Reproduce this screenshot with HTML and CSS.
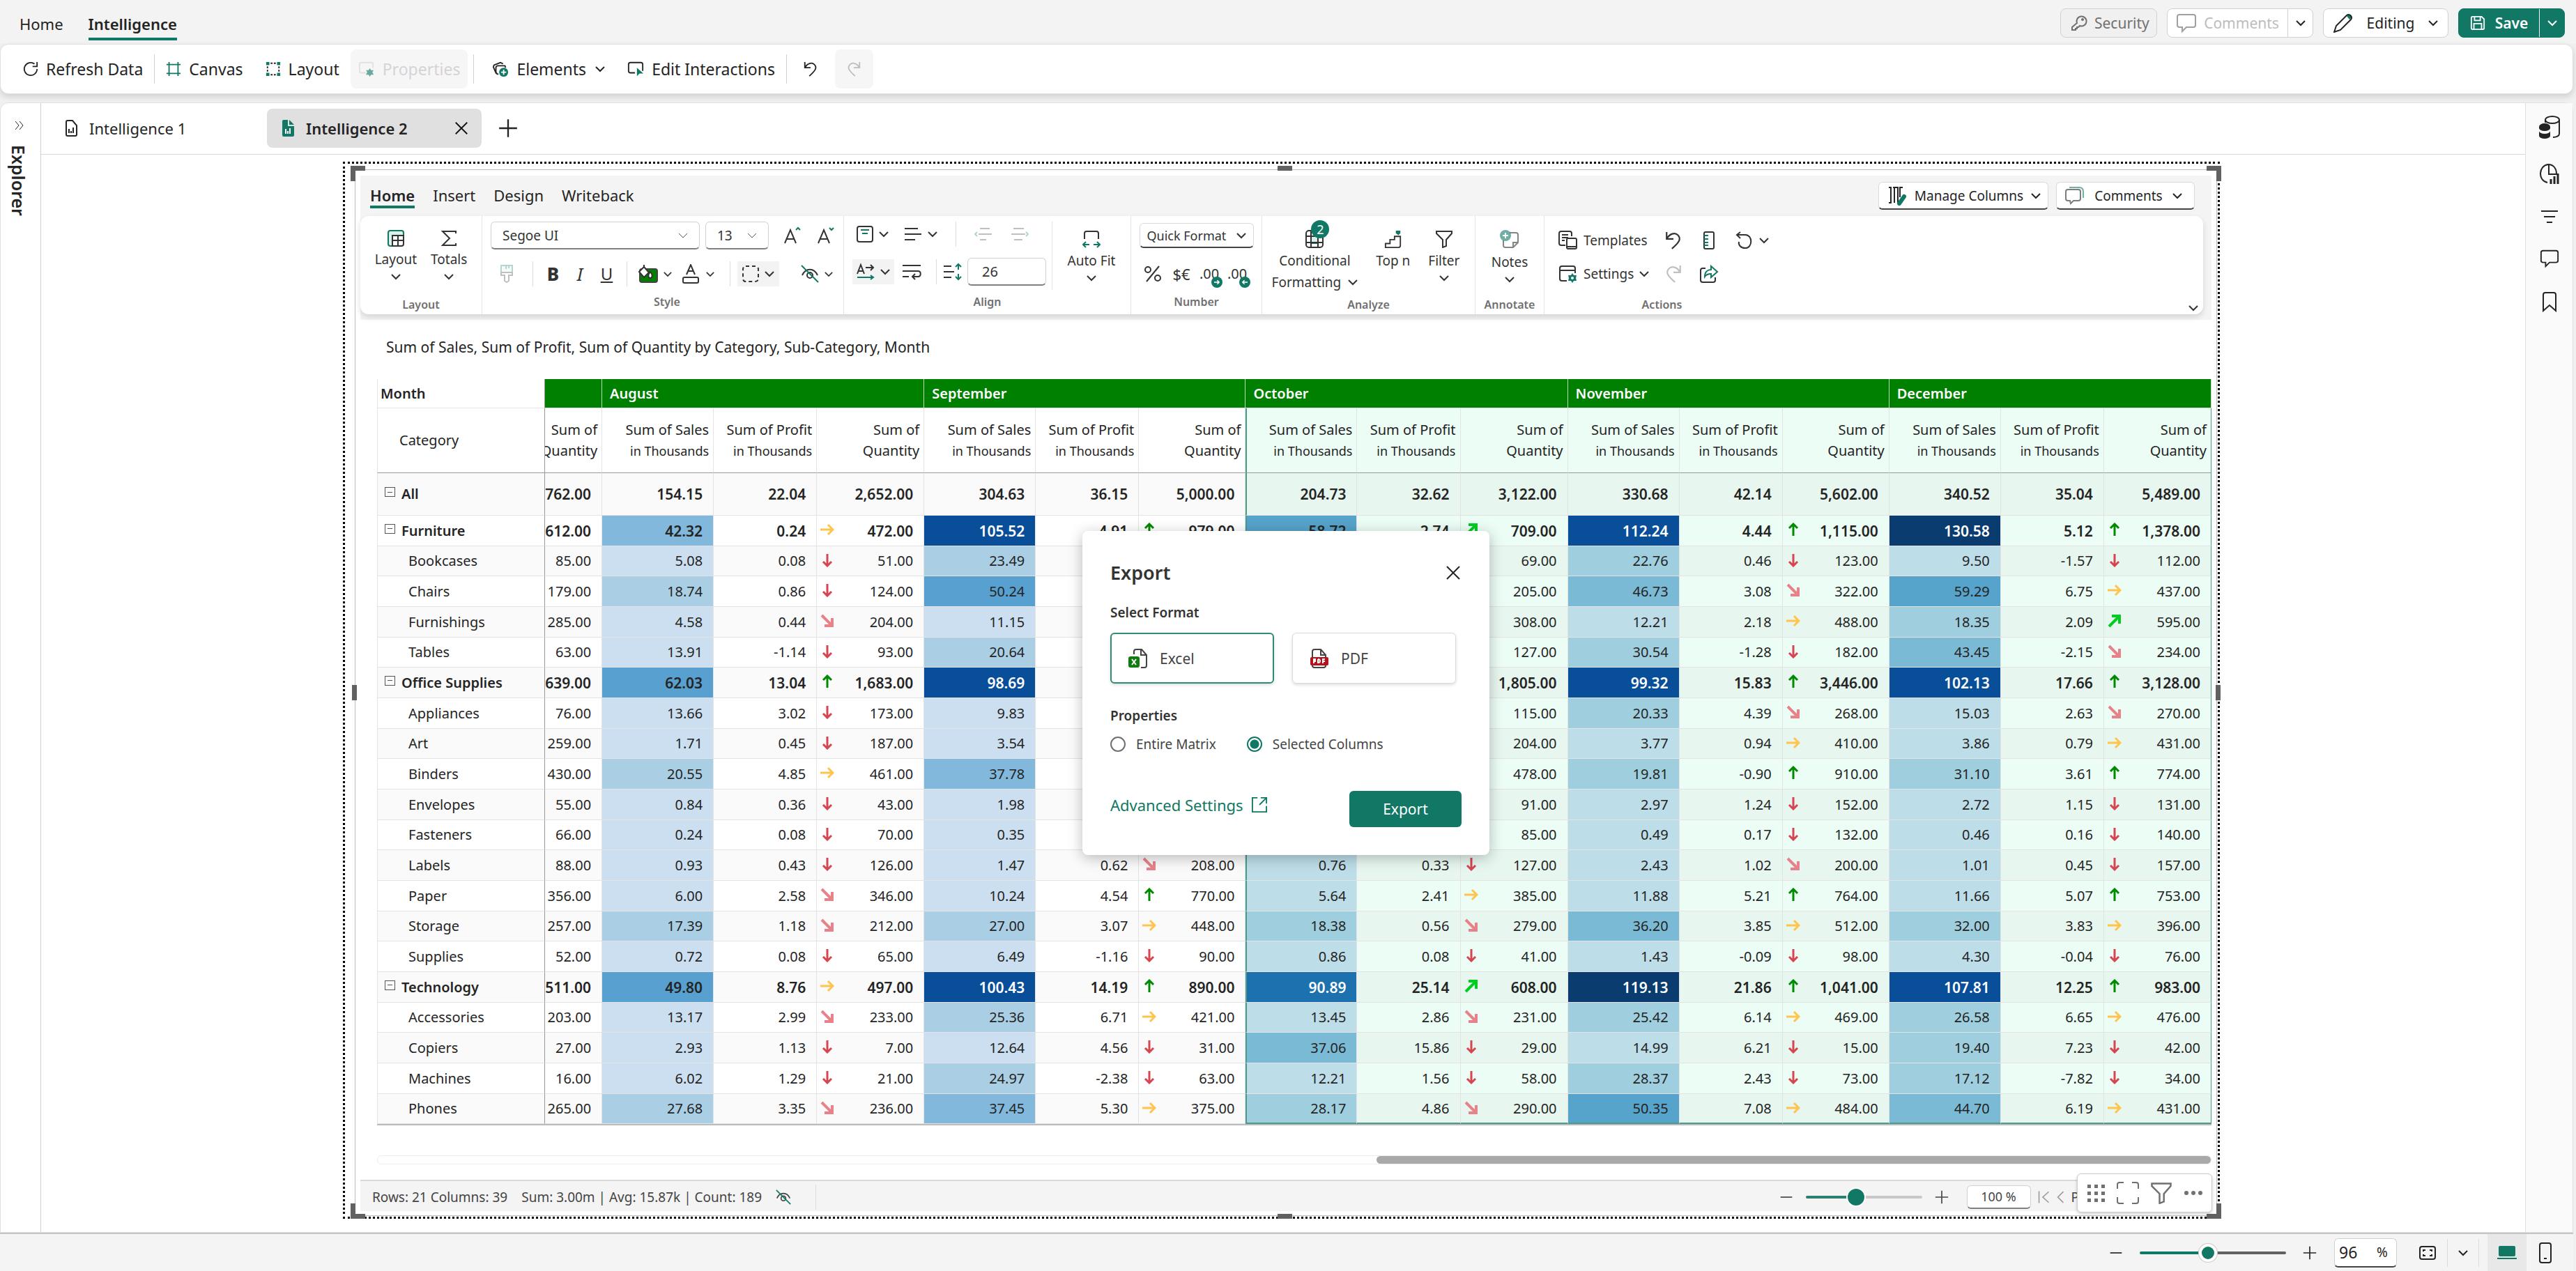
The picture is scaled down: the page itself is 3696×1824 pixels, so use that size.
FILE: index.html
```html
<!DOCTYPE html>
<html lang="en">
<head>
<meta charset="utf-8">
<title>Intelligence 2</title>
<link rel="stylesheet" href="styles.css">
</head>
<body>
<svg class="sprite" aria-hidden="true">
  <symbol id="chev" viewBox="0 0 14 10"><path d="M1 2l6 6 6-6"/></symbol>
  <symbol id="x" viewBox="0 0 24 24"><path d="M3 3l18 18M21 3L3 21"/></symbol>
  <symbol id="plus" viewBox="0 0 24 24"><path d="M12 1v22M1 12h22"/></symbol>
  <symbol id="minus" viewBox="0 0 24 24"><path d="M2 12h20"/></symbol>
  <symbol id="dbl" viewBox="0 0 16 16"><path d="M3 2l5 6-5 6M9 2l5 6-5 6"/></symbol>
  <symbol id="refresh" viewBox="0 0 24 24"><path d="M18 4a10 10 0 1 0 4 8M22 1v7h-7"/></symbol>
  <symbol id="canvas" viewBox="0 0 24 24"><path class="g" d="M5 1v22M19 1v22M1 5h22M1 19h22"/></symbol>
  <symbol id="layout2" viewBox="0 0 24 24"><path d="M8 3h3M13 3h3M8 21h3M13 21h3M3 8v3M3 13v3M21 8v3M21 13v3"/><path class="gf" d="M1 1h5v5H1zM18 1h5v5h-5zM1 18h5v5H1zM18 18h5v5h-5z"/></symbol>
  <symbol id="props" viewBox="0 0 26 24"><path d="M12 18H5a3 3 0 0 1-3-3V5a3 3 0 0 1 3-3h15a3 3 0 0 1 3 3v5"/><path class="gf" d="M18 11l2 3 4 0-2 3 2 4-4 0-2 3-2-3-4 0 2-4-2-3 4 0z"/></symbol>
  <symbol id="elements" viewBox="0 0 26 24"><path d="M7 17l-1 1-4-9 1-3 10-4 4 2M10 20H8l-2-3V9l2-2h12l1 3"/><circle class="gf" cx="18" cy="17" r="7"/><path class="w" d="M18 13v8M14 17h8"/></symbol>
  <symbol id="interact" viewBox="0 0 26 24"><path d="M12 18H5a3 3 0 0 1-3-3V5a3 3 0 0 1 3-3h16a3 3 0 0 1 3 3v10"/><path class="gf" d="M15 10l10 9-6 0-4 4z"/></symbol>
  <symbol id="undo" viewBox="0 0 24 24"><path d="M3 1v9h9M3 10c4-7 11-9 15-5 5 5 1 10-8 18"/></symbol>
  <symbol id="redo" viewBox="0 0 24 24"><path d="M21 1v9h-9M21 10c-4-7-11-9-15-5-5 5-1 10 8 18"/></symbol>
  <symbol id="key" viewBox="0 0 24 24"><path d="M9 12a7 7 0 1 1 4 4l-2 2H9v2H7v2H2v-4z"/><circle cx="17" cy="7" r="1"/></symbol>
  <symbol id="bubble" viewBox="0 0 30 28"><path d="M5 2h20a3 3 0 0 1 3 3v12a3 3 0 0 1-3 3H15l-6 6v-6H5a3 3 0 0 1-3-3V5a3 3 0 0 1 3-3z"/></symbol>
  <symbol id="pencil" viewBox="0 0 28 28"><path class="gf" d="M19 4l3-2c3-1 5 2 4 4l-3 3z"/><path d="M1 27l3-9L19 3c4-3 9 2 6 6L10 24z"/></symbol>
  <symbol id="save" viewBox="0 0 24 24"><path d="M2 4a2 2 0 0 1 2-2h14l4 4v14a2 2 0 0 1-2 2H4a2 2 0 0 1-2-2zM7 2v6h9V2M6 22v-9h12v9"/></symbol>
  <symbol id="doc" viewBox="0 0 18 24"><path d="M2 3a2 2 0 0 1 2-2h7l6 7v13a2 2 0 0 1-2 2H4a2 2 0 0 1-2-2z M6 13v6M9 16v3M12 11v8"/></symbol>
  <symbol id="docf" viewBox="0 0 18 24"><path class="gf" d="M1 2a2 2 0 0 1 2-2h6v9h9v13a2 2 0 0 1-2 2H3a2 2 0 0 1-2-2z"/><path class="gf" d="M11 0l7 7h-7z"/><path class="w" d="M6 13v7M9 16v4M12 12v8"/></symbol>
  <symbol id="db" viewBox="0 0 32 36"><ellipse cx="20" cy="8" rx="10" ry="5"/><path d="M10 8v4M30 8v20c0 3-4 5-9 5"/><path class="k" d="M1 18a8 5 0 0 1 16 0v2a8 4 0 0 1-16 0zM1 24a8 4 0 0 0 16 0v7a8 4 0 0 1-16 0z"/></symbol>
  <symbol id="pie" viewBox="0 0 30 32"><path d="M12 29C-2 26-1 5 13 3c8 0 12 6 12 14H14V3"/><path class="t" d="M17 24v7M22 20v11M27 16v15"/></symbol>
  <symbol id="lines" viewBox="0 0 26 20"><path d="M1 2h24M5 10h16M9 18h8"/></symbol>
  <symbol id="mark" viewBox="0 0 22 30"><path d="M2 28V5a3 3 0 0 1 3-3h12a3 3 0 0 1 3 3v23l-9-8z"/></symbol>
  <symbol id="mcols" viewBox="0 0 28 28"><path d="M2 2h3v22H2M10 24V2h5v22M22 2h-4v14M10 2H8"/><path class="gs" d="M24 15L17 25"/></symbol>
  <symbol id="cmts" viewBox="0 0 28 28"><path class="g h" d="M6 2h14c4 0 6 2 6 6v9"/><path class="h" d="M4 5h15a3 3 0 0 1 3 3v10a3 3 0 0 1-3 3h-7l-4 4-1-4H4a3 3 0 0 1-3-3V8a3 3 0 0 1 3-3z"/></symbol>
  <symbol id="rlay" viewBox="0 0 24 24"><path class="gl" d="M1 4a3 3 0 0 1 3-3h16a3 3 0 0 1 3 3v4H7v15H4a3 3 0 0 1-3-3z"/><path d="M7 8h16v12a3 3 0 0 1-3 3H7zM15 8v15M7 15h16"/></symbol>
  <symbol id="sigma" viewBox="0 0 22 24"><path d="M21 5V2H2l10 10L2 22h19v-3"/></symbol>
  <symbol id="aup" viewBox="0 0 26 26"><path d="M2 24L10 5l8 19M5 18h10"/><path class="g" d="M18 5l3-3 3 3"/></symbol>
  <symbol id="adn" viewBox="0 0 26 26"><path d="M2 24L10 5l8 19M5 18h10"/><path class="g" d="M18 2l3 3 3-3"/></symbol>
  <symbol id="brush" viewBox="0 0 22 26"><path class="gl" d="M3 1h16v10H3zM10 1v5M14 1v4"/><path d="M3 11h16v4h-5v8l-3 2-3-2v-8H3z"/></symbol>
  <symbol id="fill" viewBox="0 0 28 26"><rect x="2" y="6" width="25" height="19" rx="3" fill="#008000" stroke="#444"/><path fill="#fff" d="M1 10L8 3l7 8-7 7z"/><path d="M8 3V0"/><path fill="#fff" d="M17 10c4 5 3 9 0 9s-4-4 0-9z"/></symbol>
  <symbol id="fcol" viewBox="0 0 24 28"><path d="M6 15l6-14 6 14M8 10h8"/><rect x="1" y="19" width="22" height="8" rx="2"/></symbol>
  <symbol id="dash" viewBox="0 0 24 24"><rect x="1" y="1" width="22" height="22" rx="4" stroke-dasharray="5 4"/></symbol>
  <symbol id="eye" viewBox="0 0 26 26"><path d="M2 15C7 4 19 4 24 15"/><circle cx="13" cy="15" r="4"/><path class="g" d="M1 1l24 24"/></symbol>
  <symbol id="valign" viewBox="0 0 24 24"><rect x="1" y="1" width="22" height="22" rx="3"/><path class="g" d="M6 6h12M8 11h8"/></symbol>
  <symbol id="halign" viewBox="0 0 26 20"><path d="M1 2h19M1 10h24M1 18h15"/></symbol>
  <symbol id="inl" viewBox="0 0 26 20"><path d="M8 2h14M6 10h19M8 18h9"/><path class="g" d="M4 7l-3 3 3 3"/></symbol>
  <symbol id="inr" viewBox="0 0 26 20"><path d="M4 2h15M1 10h20M5 18h12"/><path class="g" d="M22 7l3 3-3 3"/></symbol>
  <symbol id="adir" viewBox="0 0 26 24"><path d="M1 15L6 2l5 13M3 11h6M13 6h10M20 2l4 4-4 4"/><path class="g" d="M1 20h23M20 17l4 3-4 3"/></symbol>
  <symbol id="wrap" viewBox="0 0 28 24"><path d="M1 3h26M1 11h22c5 0 5 8 0 8h-7M19 15l-4 4 4 4M1 19h9"/></symbol>
  <symbol id="lh" viewBox="0 0 28 26"><path d="M1 5h11M1 13h15M1 21h11"/><path class="g" d="M22 10V2M18 6l4-4 4 4M22 16v8M18 20l4 4 4-4"/></symbol>
  <symbol id="fit" viewBox="0 0 26 26"><path d="M3 13V5a3 3 0 0 1 3-3h14a3 3 0 0 1 3 3v8"/><path class="g" d="M1 21h9M5 17l-4 4 4 4M25 21h-9M21 17l4 4-4 4"/></symbol>
  <symbol id="pct" viewBox="0 0 26 26"><circle cx="6" cy="7" r="4"/><circle cx="20" cy="19" r="4"/><path d="M22 2L4 24"/></symbol>
  <symbol id="cf" viewBox="0 0 26 26"><path class="gl" d="M8 9h10v10H8z"/><rect x="1" y="1" width="24" height="24" rx="4"/><path d="M8 1v24M18 1v24M1 9h24M1 18h24"/></symbol>
  <symbol id="topn" viewBox="0 0 26 28"><path d="M1 27V21h7v-6h7V10h9v14a3 3 0 0 1-3 3z"/><path class="gf" d="M17 1h7v4l-3 3-4-3z"/></symbol>
  <symbol id="funnel" viewBox="0 0 26 26"><path d="M2 2h22v3l-8 9v9l-5 2V14L2 5z"/></symbol>
  <symbol id="note" viewBox="0 0 28 28"><path class="h" d="M14 4h9a3 3 0 0 1 3 3v11l-7 7H8a3 3 0 0 1-3-3v-7M26 18h-7v7"/><circle class="gf h" cx="8" cy="8" r="8"/><path class="w" d="M8 4v8M4 8h8"/></symbol>
  <symbol id="tpl" viewBox="0 0 28 28"><path d="M10 21H4a3 3 0 0 1-3-3V4a3 3 0 0 1 3-3h12a3 3 0 0 1 3 3v4M5 6h9M5 10h9M5 14h4"/><rect x="12" y="11" width="14" height="15" rx="2"/><path d="M12 23h14"/></symbol>
  <symbol id="ruler" viewBox="0 0 16 26"><rect x="1" y="1" width="14" height="24" rx="2"/><path class="g" d="M1 6h6M1 11h6M1 16h6M1 20h6"/></symbol>
  <symbol id="reset" viewBox="0 0 26 26"><path d="M2 5h12c11 0 11 19 0 19-7 0-10-5-9-9M7 1L2 5l5 5"/></symbol>
  <symbol id="sett" viewBox="0 0 28 26"><path d="M12 23H5a3 3 0 0 1-3-3V5a3 3 0 0 1 3-3h16a3 3 0 0 1 3 3v7M2 8h22"/><path class="gf" d="M20 12l2 3 4 0-1 4 1 4-4 0-2 3-2-3-4 0 1-4-1-4 4 0z"/><circle cx="20" cy="19" r="1" fill="#fff" stroke="#fff"/></symbol>
  <symbol id="share" viewBox="0 0 28 26"><path d="M9 5H5a3 3 0 0 0-3 3v14a3 3 0 0 0 3 3h15a3 3 0 0 0 3-3v-4"/><path class="g" d="M17 2l9 8-9 8v-5c-5 0-7 1-9 4 0-7 4-10 9-10z"/></symbol>
  <symbol id="up" viewBox="0 0 20 20"><path d="M10 19V2M4 8l6-6 6 6"/></symbol>
  <symbol id="dn" viewBox="0 0 20 20"><path d="M10 1v17M4 12l6 6 6-6"/></symbol>
  <symbol id="rt" viewBox="0 0 20 20"><path d="M0 10h18M11 3l7 7-7 7"/></symbol>
  <symbol id="lf" viewBox="0 0 20 20"><path d="M20 10H2M9 3l-7 7 7 7"/></symbol>
  <symbol id="ne" viewBox="0 0 20 20"><path d="M2 18L16 4M6 3h11v11"/></symbol>
  <symbol id="se" viewBox="0 0 20 20"><path d="M2 2l14 14M6 17h11V6"/></symbol>
  <symbol id="open" viewBox="0 0 24 24"><path d="M9 1H1v22h22v-9M14 1h9v9M23 1L12 12"/></symbol>
  <symbol id="xls" viewBox="0 0 28 28"><path d="M8 8V4a3 3 0 0 1 3-3h8l7 8v15a3 3 0 0 1-3 3h-5M18 1v8h8"/><rect x="0" y="11" width="16" height="16" rx="3" fill="#107c10" stroke="none"/><path class="w" d="M5 15l6 8M11 15l-6 8"/></symbol>
  <symbol id="pdf" viewBox="0 0 28 28"><path d="M4 12V4a3 3 0 0 1 3-3h9l7 8v3M16 1v8h7M4 22v2a3 3 0 0 0 3 3h13a3 3 0 0 0 3-3v-2"/><rect x="1" y="12" width="26" height="12" rx="2" fill="#b5121b" stroke="none"/><path class="w" d="M6 21v-6h2v3H6M12 15v5c4 0 4-5 0-5M19 21v-6h3M19 18h3"/></symbol>
  <symbol id="first" viewBox="0 0 22 24"><path d="M2 1v22M20 2L9 12l11 10"/></symbol>
  <symbol id="prev" viewBox="0 0 14 24"><path d="M12 2L2 12l10 10"/></symbol>
  <symbol id="dots9" viewBox="0 0 28 28"><path class="k" d="M2 2h5v5H2zM12 2h5v5h-5zM22 2h5v5h-5zM2 12h5v5H2zM12 12h5v5h-5zM22 12h5v5h-5zM2 22h5v5H2zM12 22h5v5h-5zM22 22h5v5h-5z"/></symbol>
  <symbol id="focus" viewBox="0 0 32 32"><path d="M1 10V4a3 3 0 0 1 3-3h6M22 1h6a3 3 0 0 1 3 3v6M31 22v6a3 3 0 0 1-3 3h-6M10 31H4a3 3 0 0 1-3-3v-6"/></symbol>
  <symbol id="more" viewBox="0 0 28 8"><circle class="k" cx="4" cy="4" r="3"/><circle class="k" cx="14" cy="4" r="3"/><circle class="k" cx="24" cy="4" r="3"/></symbol>
  <symbol id="fitp" viewBox="0 0 24 20"><rect x="1" y="1" width="22" height="18" rx="3"/><path d="M6 8V6h3M15 6h3v2M18 12v2h-3M9 14H6v-2"/></symbol>
  <symbol id="laptop" viewBox="0 0 28 20"><rect class="gf" x="2" y="0" width="24" height="15" rx="2"/><path class="g" d="M0 18h28"/></symbol>
  <symbol id="phone" viewBox="0 0 18 30"><rect x="1" y="1" width="16" height="28" rx="3"/><path d="M7 23h4"/></symbol>
</svg>

<header class="top">
  <nav class="top-nav"><a href="#">Home</a><a href="#" class="on">Intelligence</a></nav>
  <div class="top-actions">
    <button class="pill sec" disabled><svg class="i24"><use href="#key"/></svg>Security</button>
    <div class="split"><button class="cm" disabled><svg class="i30"><use href="#bubble"/></svg>Comments</button><button class="dd" aria-label="Comment options"><svg class="chev"><use href="#chev"/></svg></button></div>
    <button class="pill edit"><svg class="i28"><use href="#pencil"/></svg>Editing<svg class="chev"><use href="#chev"/></svg></button>
    <div class="split save"><button class="sv"><svg class="i22"><use href="#save"/></svg>Save</button><button class="dd" aria-label="Save options"><svg class="chev"><use href="#chev"/></svg></button></div>
  </div>
</header>

<div class="toolbar">
  <button class="tb"><svg class="i22"><use href="#refresh"/></svg>Refresh Data</button>
  <i class="sep"></i>
  <button class="tb"><svg class="i22"><use href="#canvas"/></svg>Canvas</button>
  <button class="tb"><svg class="i22"><use href="#layout2"/></svg>Layout</button>
  <button class="tb off" disabled><svg class="i24"><use href="#props"/></svg>Properties</button>
  <i class="sep tight"></i>
  <button class="tb"><svg class="i24"><use href="#elements"/></svg>Elements<svg class="chev"><use href="#chev"/></svg></button>
  <button class="tb"><svg class="i24"><use href="#interact"/></svg>Edit Interactions</button>
  <i class="sep"></i>
  <button class="tb ico" aria-label="Undo"><svg class="i22"><use href="#undo"/></svg></button>
  <button class="tb ico off" disabled aria-label="Redo"><svg class="i22"><use href="#redo"/></svg></button>
</div>

<main class="shell">
  <aside class="explorer"><button class="bare thin" aria-label="Expand"><svg class="i16"><use href="#dbl"/></svg></button><span>Explorer</span></aside>
  <section class="stage">
    <div class="tabs">
      <button class="tab"><svg class="i24"><use href="#doc"/></svg>Intelligence 1</button>
      <button class="tab on"><svg class="i24"><use href="#docf"/></svg>Intelligence 2<svg class="i22 close"><use href="#x"/></svg></button>
      <button class="bare" aria-label="Add tab"><svg class="i28"><use href="#plus"/></svg></button>
    </div>
    <div class="canvas">
      <div class="report">
        <div class="frame"></div>
        <b class="hd tl"></b><b class="hd tr"></b><b class="hd bl"></b><b class="hd br"></b>
        <b class="hd tm"></b><b class="hd bm"></b><b class="hd lm"></b><b class="hd rm"></b>

        <div class="ribbon-bg">
          <div class="rtabs">
            <nav><a href="#" class="on">Home</a><a href="#">Insert</a><a href="#">Design</a><a href="#">Writeback</a></nav>
            <button class="rbtn"><svg class="i28"><use href="#mcols"/></svg>Manage Columns<svg class="chev"><use href="#chev"/></svg></button>
            <button class="rbtn wide"><svg class="i28"><use href="#cmts"/></svg>Comments<svg class="chev"><use href="#chev"/></svg></button>
          </div>
          <div class="ribbon">
            <div class="grp g-layout big">
              <div class="bigs c2">
                <button><svg class="i24"><use href="#rlay"/></svg>Layout<svg class="chev"><use href="#chev"/></svg></button>
                <button><svg class="i24"><use href="#sigma"/></svg>Totals<svg class="chev"><use href="#chev"/></svg></button>
              </div>
              <span class="lbl">Layout</span>
            </div>
            <div class="grp g-style">
              <div class="row r1">
                <select aria-label="Font" class="sel font"><option>Segoe UI</option></select>
                <select aria-label="Font size" class="sel size"><option>13</option></select>
                <button class="ib" aria-label="Grow font"><svg class="i26"><use href="#aup"/></svg></button>
                <button class="ib" aria-label="Shrink font"><svg class="i26"><use href="#adn"/></svg></button>
              </div>
              <div class="row r2">
                <button class="ib dim" aria-label="Format painter"><svg class="i26"><use href="#brush"/></svg></button>
                <i class="vs"></i>
                <button class="ib bold">B</button><button class="ib ital">I</button><button class="ib undl">U</button>
                <i class="vs"></i>
                <button class="ib" aria-label="Fill"><svg class="i28"><use href="#fill"/></svg><svg class="chev sm"><use href="#chev"/></svg></button>
                <button class="ib" aria-label="Font color"><svg class="i28"><use href="#fcol"/></svg><svg class="chev sm"><use href="#chev"/></svg></button>
                <i class="vs"></i>
                <button class="ib shade" aria-label="Border"><svg class="i24"><use href="#dash"/></svg><svg class="chev"><use href="#chev"/></svg></button>
                <button class="ib end" aria-label="Hide"><svg class="i26"><use href="#eye"/></svg><svg class="chev sm"><use href="#chev"/></svg></button>
              </div>
              <span class="lbl">Style</span>
            </div>
            <div class="grp g-align">
              <div class="al">
                <div class="row a1">
                  <button class="ib" aria-label="Vertical align"><svg class="i24"><use href="#valign"/></svg><svg class="chev"><use href="#chev"/></svg></button>
                  <button class="ib" aria-label="Horizontal align"><svg class="i26"><use href="#halign"/></svg><svg class="chev"><use href="#chev"/></svg></button>
                  <i class="vs"></i>
                  <button class="ib dim" aria-label="Outdent"><svg class="i26"><use href="#inl"/></svg></button>
                  <button class="ib dim" aria-label="Indent"><svg class="i26"><use href="#inr"/></svg></button>
                </div>
                <div class="row a2">
                  <button class="ib shade" aria-label="Text direction"><svg class="i26"><use href="#adir"/></svg><svg class="chev"><use href="#chev"/></svg></button>
                  <button class="ib" aria-label="Wrap"><svg class="i28"><use href="#wrap"/></svg></button>
                  <i class="vs"></i>
                  <svg class="i28"><use href="#lh"/></svg>
                  <input aria-label="Row height" class="num" value="26">
                </div>
              </div>
              <div class="bigs fitc"><button><svg class="i26"><use href="#fit"/></svg>Auto Fit<svg class="chev"><use href="#chev"/></svg></button></div>
              <span class="lbl">Align</span>
            </div>
            <div class="grp g-number">
              <div class="row n1"><button class="rbtn qf">Quick Format<svg class="chev"><use href="#chev"/></svg></button></div>
              <div class="row n2">
                <button class="ib" aria-label="Percent"><svg class="i26"><use href="#pct"/></svg></button>
                <button class="ib cur">$€</button>
                <button class="ib dec">.00<em><svg><use href="#rt"/></svg></em></button>
                <button class="ib dec">.00<em><svg><use href="#lf"/></svg></em></button>
              </div>
              <span class="lbl">Number</span>
            </div>
            <div class="grp g-analyze big">
              <div class="bigs c3">
                <button class="cf"><span class="badged"><svg class="i26"><use href="#cf"/></svg><em>2</em></span>Conditional<span>Formatting <svg class="chev"><use href="#chev"/></svg></span></button>
                <button><svg class="i26"><use href="#topn"/></svg>Top n</button>
                <button><svg class="i26"><use href="#funnel"/></svg>Filter<svg class="chev"><use href="#chev"/></svg></button>
              </div>
              <span class="lbl">Analyze</span>
            </div>
            <div class="grp g-annotate big">
              <div class="bigs"><button><svg class="i28"><use href="#note"/></svg>Notes<svg class="chev"><use href="#chev"/></svg></button></div>
              <span class="lbl">Annotate</span>
            </div>
            <div class="grp g-actions big">
              <div class="acts">
                <button class="ib"><svg class="i28"><use href="#tpl"/></svg>Templates</button>
                <button class="ib" aria-label="Undo"><svg class="i26"><use href="#undo"/></svg></button>
                <button class="ib" aria-label="Ruler"><svg class="i26"><use href="#ruler"/></svg></button>
                <button class="ib" aria-label="Reset"><svg class="i26"><use href="#reset"/></svg><svg class="chev"><use href="#chev"/></svg></button>
                <button class="ib"><svg class="i28"><use href="#sett"/></svg>Settings<svg class="chev"><use href="#chev"/></svg></button>
                <button class="ib dim" aria-label="Redo"><svg class="i26"><use href="#redo"/></svg></button>
                <button class="ib" aria-label="Share"><svg class="i28"><use href="#share"/></svg></button>
              </div>
              <span class="lbl">Actions</span>
            </div>
            <button class="bare collapse" aria-label="Collapse ribbon"><svg class="chev"><use href="#chev"/></svg></button>
          </div>
        </div>

        <h2 class="vtitle">Sum of Sales, Sum of Profit, Sum of Quantity by Category, Sub-Category, Month</h2>
        <table class="grid" id="grid"></table>
        <div class="hscroll"><i></i></div>
        <div class="status">
          <span class="s1">Rows: 21 Columns: 39</span><span>Sum: 3.00m | Avg: 15.87k | Count: 189</span>
          <svg class="i22 slash"><use href="#eye"/></svg><i class="vs"></i>
          <div class="zoomer">
            <button class="bare" aria-label="Zoom out"><svg class="i20"><use href="#minus"/></svg></button>
            <input type="range" class="rng a" min="0" max="100" value="42" aria-label="Matrix zoom">
            <button class="bare" aria-label="Zoom in"><svg class="i20"><use href="#plus"/></svg></button>
            <input class="pct" value="100 %" aria-label="Zoom percent">
            <button class="bare grey" aria-label="First page"><svg class="i22 narrow"><use href="#first"/></svg></button>
            <button class="bare grey" aria-label="Previous page"><svg class="i22 slim"><use href="#prev"/></svg></button>
            <span>P</span>
          </div>
          <div class="float">
            <button class="bare" aria-label="Drag"><svg class="i28"><use href="#dots9"/></svg></button>
            <button class="bare" aria-label="Focus"><svg class="i32"><use href="#focus"/></svg></button>
            <button class="bare" aria-label="Filter"><svg class="i32"><use href="#funnel"/></svg></button>
            <button class="bare" aria-label="More"><svg class="i28"><use href="#more"/></svg></button>
          </div>
        </div>

        <div class="veil">
          <form class="dialog" role="dialog" aria-label="Export">
            <div class="dhead"><h3>Export</h3><button type="button" class="bare" aria-label="Close"><svg class="i24"><use href="#x"/></svg></button></div>
            <h4>Select Format</h4>
            <div class="fmts">
              <button type="button" class="fmt on"><svg class="i28"><use href="#xls"/></svg>Excel</button>
              <button type="button" class="fmt"><svg class="i28"><use href="#pdf"/></svg>PDF</button>
            </div>
            <h4>Properties</h4>
            <div class="radios">
              <label><input type="radio" name="scope">Entire Matrix</label>
              <label><input type="radio" name="scope" checked>Selected Columns</label>
            </div>
            <div class="dfoot"><a href="#">Advanced Settings<svg class="i22"><use href="#open"/></svg></a><button type="button" class="go">Export</button></div>
          </form>
        </div>
      </div>
    </div>
  </section>
  <aside class="rail">
    <button class="bare" aria-label="Data"><svg class="i36"><use href="#db"/></svg></button>
    <button class="bare" aria-label="Visuals"><svg class="i32"><use href="#pie"/></svg></button>
    <button class="bare" aria-label="Filters"><svg class="i26"><use href="#lines"/></svg></button>
    <button class="bare" aria-label="Comments"><svg class="i28"><use href="#bubble"/></svg></button>
    <button class="bare" aria-label="Bookmarks"><svg class="i30"><use href="#mark"/></svg></button>
  </aside>
</main>

<footer class="foot">
  <button class="bare" aria-label="Zoom out"><svg class="i20"><use href="#minus"/></svg></button>
  <input type="range" class="rng b" min="0" max="100" value="46" aria-label="Page zoom">
  <button class="bare" aria-label="Zoom in"><svg class="i20"><use href="#plus"/></svg></button>
  <label class="pctbox"><input value="96" aria-label="Page zoom percent">%</label>
  <button class="bare fitb" aria-label="Fit to page"><svg class="i24"><use href="#fitp"/></svg></button>
  <i class="vs"></i>
  <button class="bare fchev" aria-label="Fit options"><svg class="chev"><use href="#chev"/></svg></button>
  <i class="vs"></i>
  <button class="bare dev on" aria-label="Desktop"><svg class="i28"><use href="#laptop"/></svg></button>
  <button class="bare dev" aria-label="Mobile"><svg class="i30"><use href="#phone"/></svg></button>
</footer>
<script src="grid.js"></script>
</body>
</html>
```
FILE: styles.css
```css
*{box-sizing:border-box}
body{margin:0;min-height:100vh;display:flex;flex-direction:column;background:#f0f0f0;color:#242424;font:22px/30px "Noto Sans","Open Sans",sans-serif}
button,input,select{font:inherit;color:inherit}
button{background:none;border:0;padding:0;display:inline-flex;align-items:center;white-space:nowrap}
a{color:inherit;text-decoration:none}
em,i{font-style:normal}
.sprite{position:absolute;width:0;height:0}
svg{flex:none;display:block;fill:none;stroke:currentColor;stroke-width:2}
.i16{width:16px;height:16px}
.i20{width:20px;height:20px}
.i22{width:22px;height:22px}
.i24{width:24px;height:24px}
.i26{width:26px;height:26px}
.i28{width:28px;height:28px}
.i30{width:30px;height:30px}
.i32{width:32px;height:32px}
.i36{width:36px;height:36px}
.narrow{width:17px}
.slim{width:11px}
.chev{width:14px;height:10px}
.chev.sm{width:12px;height:9px}
.g{stroke:#117865}
.gs{stroke:#117865;stroke-width:6;stroke-linecap:round}
.gf{fill:#117865;stroke:none}
.gl{fill:#d9efea;stroke:#117865}
.w{stroke:#fff}
.k{fill:currentColor;stroke:none}
.t{stroke-width:3}
.h{opacity:.6}
.bare{justify-content:center}
.thin svg{stroke-width:1px}

.top{height:63px;padding:12px 16px 0 28px;display:flex;justify-content:space-between;background:#f3f3f3}
.top-nav{display:flex;gap:36px;font-size:22px}
.top-nav a{height:46px;padding-top:7px;border-bottom:4px solid transparent}
.top-nav .on{font-weight:600;border-color:#117865}
.top-actions{display:flex;gap:14px;font-size:21px}
.pill,.split{height:42px;border:1px solid #d1d1d1;border-radius:8px;background:#fff}
.pill{padding:0 14px}
.sec{width:139px;gap:10px;background:#f0f0f0;color:#707070}
.split{display:flex;width:210px;overflow:hidden}
.split button{justify-content:center}
.cm{flex:1;gap:10px;color:#bdbdbd}
.cm svg{color:#a0a0a0}
.dd{width:36px;border-left:1px solid #d1d1d1}
.edit{width:180px;justify-content:space-between}
.split.save{width:153px;background:#117865;border-color:#117865;color:#fff;font-weight:600}
.sv{flex:1;gap:14px}
.save .dd{border-color:#fff}

.toolbar{height:72px;margin:0 4px 0 0;padding:0 32px;display:flex;align-items:center;border:1px solid #e0e0e0;border-radius:12px;background:#fff;box-shadow:0 4px 8px #0002;font-size:23px}
.tb{gap:11px;height:56px;padding:0 16px;border-radius:8px}
.tb:first-child{padding-left:0}
.tb .chev{margin-left:2px}
.sep{width:1px;height:42px;background:#d1d1d1}
.tight{margin:0 10px 0 8px}
.tb.off{background:#f7f6f7;color:#d5d3d6;padding:0 11px}
.off svg{opacity:.6}
.tb.ico{width:55px;padding:0;justify-content:center;margin-left:7px}
.tb.ico.off{color:#999}

.shell{flex:1;display:flex;margin:12px 4px 0 0;border:1px solid #e0e0e0;border-radius:12px 12px 0 0;background:#fff}
.explorer{width:58px;display:flex;flex-direction:column;align-items:center;padding:24px 6px 0 0;gap:20px;border-right:1px solid #d1d1d1}
.explorer span{writing-mode:vertical-rl;font-size:25px;font-weight:600}
.stage{flex:1;min-width:0}
.tabs{height:74px;display:flex;align-items:center;border-bottom:1px solid #d9d9d9;padding:0 0 2px 31px;gap:24px}
.tab{gap:14px;width:275px;height:56px;border-radius:8px}
.tab.on{width:308px;padding:0 18px;margin-left:-6px;background:#e0e0e0;font-weight:600}
.close{margin-left:auto;color:#111}
.canvas{padding:10px 438px 19px 433px}
.rail{width:68px;display:flex;flex-direction:column;align-items:center;gap:33px;padding-top:16px;border-left:1px solid #e0e0e0;background:#fbfafb}

.report{position:relative;border:3px dotted #000;padding:17px 9px 8px 22px;background:#fff}
.frame{position:absolute;inset:8px 1px 1px 14px;border:1px solid #bdbdbd;pointer-events:none}
.hd{position:absolute;width:21px;height:22px;border:0 solid #616161}
.tl{left:8px;top:3px;border-width:7px 0 0 7px}
.tr{right:-5px;top:3px;border-width:7px 7px 0 0}
.bl{left:8px;bottom:-3px;border-width:0 0 7px 7px}
.br{right:-5px;bottom:-3px;border-width:0 7px 7px 0}
.tm,.bm{left:50%;margin-left:-6px;height:7px;border-top-width:7px}
.tm{top:3px}
.bm{bottom:-3px}
.lm,.rm{top:50%;margin-top:-8px;width:7px;border-left-width:7px}
.lm{left:10px}
.rm{right:-4px}

.ribbon-bg{background:#f4f4f4;padding-bottom:8px}
.rtabs{height:58px;display:flex;align-items:flex-start;gap:11px;padding:9px 24px 0 14px}
.rtabs nav{display:flex;gap:26px;margin-right:auto}
.rtabs a{height:38px;padding-top:4px;border-bottom:4px solid transparent}
.rtabs a.on{font-weight:600;border-color:#117865}
.rbtn{height:40px;width:244px;padding:0 10px 0 12px;justify-content:space-between;border:1px solid #d9d9d9;border-bottom:2px solid #444;border-radius:6px;background:#fff;font-size:19px}
.rbtn.wide{width:199px;padding-right:17px}
.ribbon{height:141px;margin-right:12px;display:flex;border-radius:12px;background:#fff;box-shadow:0 4px 8px #0002;font-size:19px;line-height:26px;color:#333}
.grp{display:grid;padding-top:8px;border-right:1px solid #e3e3e3;grid-template-columns:1fr;grid-template-rows:40px 58px 34px;align-items:center}
.grp.big{grid-template-rows:100px 38px;align-items:start}
.grp .lbl{grid-column:1/-1;align-self:center;text-align:center;font-size:16px;font-weight:600;color:#707070}
.bigs{display:flex;height:94px;padding-top:8px;justify-content:center}
.bigs button{flex-direction:column;gap:5px;justify-content:flex-start;padding-top:4px}
.bigs .chev{margin-top:2px}
.bigs .cf .chev{margin:0}
.g-layout{width:175px}
.c2{gap:20px}
.g-style{width:519px;padding-left:12px}
.row{display:flex;align-items:center}
.sel{height:40px;appearance:none;border:1px solid #d1d1d1;border-bottom:2px solid #808080;border-radius:6px;padding:0 16px;background:#fff url("data:image/svg+xml,%3Csvg xmlns='http://www.w3.org/2000/svg' width='14' height='10'%3E%3Cpath d='M1 2l6 6 6-6' fill='none' stroke='%23555'/%3E%3C/svg%3E") no-repeat right 16px center}
.font{width:300px;margin-right:8px}
.size{width:91px;margin-right:10px}
.ib{height:36px;justify-content:center;gap:8px}
.r1 .ib{width:48px}
.r2{display:grid;padding-top:12px;grid-template-columns:46px 29px 29px 48px 29px 29px 52px 70px 22px 60px 77px}
.vs{width:1px;height:36px;background:#dcdcdc;justify-self:center}
.dim{opacity:.3}
.shade{background:#f3f3f3}
.end{justify-content:flex-end}
.bold{font-weight:800;font-size:26px}
.ital{font-style:italic;font-size:26px}
.undl{text-decoration:underline;font-size:24px}
.grp.g-align{width:412px;grid-template-columns:299px 112px;grid-template-rows:98px 34px;align-items:start}
.al{border-right:1px solid #e3e3e3;height:98px}
.a1{display:grid;grid-template-columns:73px 65px 36px 44px 60px;height:34px;padding-left:4px}
.a2{display:grid;grid-template-columns:60px 50px 20px 35px 113px;height:40px;margin-top:18px;padding-left:12px}
.num{height:40px;width:113px;padding:0 20px;border:1px solid #d1d1d1;border-bottom:2px solid #808080;border-radius:6px;font-size:20px}
.g-number{width:188px}
.n1{justify-content:center}
.qf{width:164px;height:36px;padding:0 10px;font-size:18px}
.n2{display:grid;grid-template-columns:42px 40px 40px 40px;padding:12px 0 0 10px}
.cur{font-size:22px}
.dec{position:relative;font-size:20px}
.dec em{position:absolute;right:1px;bottom:-2px;width:16px;height:16px;padding:4px;border-radius:8px;background:#117865;color:#fff}
.dec svg{width:8px;height:8px;stroke-width:4}
.g-analyze{width:306px}
.c3{gap:26px;padding-right:8px}
.cf span{display:flex;align-items:center;gap:10px}
.badged{position:relative}
.badged em{position:absolute;left:8px;top:-14px;width:26px;height:26px;border-radius:13px;background:#117865;color:#fff;text-align:center;font-size:18px}
.g-annotate{width:99px}
.g-actions{width:336px;border:0}
.acts{display:grid;grid-template-columns:137px 56px 46px 78px;grid-template-rows:48px 48px;align-items:center;padding:3px 0 0 20px}
.acts .ib:nth-child(4n+1){justify-content:flex-start}
.collapse{margin:0 7px 4px auto;align-self:flex-end}

.vtitle{margin:0;padding:24px 0 31px 37px;font-size:21px;line-height:30px;font-weight:400}
.grid{margin-left:24px;width:calc(100% - 24px);table-layout:fixed;border-collapse:separate;border-spacing:0;font-size:20px;line-height:28px;border-bottom:2px solid #bbb}
.grid th,.grid td{padding:0 15px 0 0;text-align:right;font-weight:400;white-space:nowrap;overflow:hidden;border-right:1px solid #e3e3e3;border-bottom:1px solid #e3e3e3}
.months{height:42px}
.grid .months th{background:#008000;color:#fff;font-weight:600;text-align:left;padding-left:11px;border-right-color:#bcd9bc}
.measures{height:93px}
.grid .measures th{padding-right:6px;line-height:30px;border-bottom-color:#999}
.measures small{font-size:18px;display:block}
.grid tbody tr{height:44px;background:#fff}
.grid tbody tr:nth-child(3n){height:43px}
.grid tbody tr:first-child{height:61px}
.grid tbody tr:nth-child(odd){background:#fafafa}
.grid tbody tr:nth-child(even) .s{background:#ecfdf6}
.grid tbody tr:nth-child(odd) .s{background:#e7f7ef}
.grid .measures .s{background:#ecfdf6}
.grid th.name{text-align:left;padding-left:44px;border-right-color:#999;border-left:1px solid #e3e3e3}
.grid .months .name{padding-left:4px;background:#fff;color:#242424}
.grid .measures .name{padding-left:31px}
.grid .p th,.grid .p td{font-weight:600;font-size:21px}
.grid .p th.name{padding-left:10px;font-size:20px}
.box{display:inline-block;width:15px;height:14px;margin-right:9px;border:1px solid #555;vertical-align:3px;background:linear-gradient(#555,#555) center/7px 1px no-repeat}
.grid .q{position:relative}
.clip div{display:flex;justify-content:flex-end}
.arr{position:absolute;left:5px;top:10px;width:20px;height:20px;stroke-width:3}
.up{color:#008a00}.dn{color:#d64550}.rt{color:#ffc44d}.ne{color:#0c2;stroke-width:4}.se{color:#e8828a;stroke-width:4}
.grid .edge{border-left:2px solid #4a9b8c}
.grid tr td:last-child,.grid .measures th:last-child{border-right-color:#4a9b8c}
.grid tbody tr:last-child .s{border-bottom:2px solid #4a9b8c}
.grid tbody tr .h1{background:#ccdff0}
.grid tbody tr .h2{background:#aacfe5}
.grid tbody tr .h3{background:#82b8db}
.grid tbody tr .h4{background:#58a0cf}
.grid tbody tr .s.h1{background:#bddde8}
.grid tbody tr .s.h2{background:#9fcfde}
.grid tbody tr .s.h3{background:#7bbad5}
.grid tbody tr .s.h4{background:#56a3cb}
.grid tbody tr .h5{background:#1d71ae!important;color:#fff}
.grid tbody tr .h6{background:#084e98!important;color:#fff}
.grid tbody tr .h7{background:#0b3c6f!important;color:#fff}

.hscroll{height:13px;margin:43px 0 22px 24px;border-radius:6px;border:1px solid #ededed;display:flex;justify-content:flex-end}
.hscroll i{width:1197px;height:11px;border-radius:6px;background:#a9a9a9}
.status{position:relative;height:45px;border-top:2px solid #d9d9d9;background:#f4f4f4;display:flex;align-items:center;padding:2px 0 0 17px;gap:20px;font-size:19px;color:#444}
.slash .g,.slash{stroke:#444}
.status .vs{margin-left:15px}
.zoomer{margin-left:auto;margin-right:190px;display:flex;align-items:center;gap:10px}
.pct{width:92px;height:34px;margin-left:16px;border:1px solid #d1d1d1;border-bottom:2px solid #808080;border-radius:6px;background:#fff;text-align:center;font-size:18px;padding:0}
.grey{color:#999}
.rng{appearance:none;margin:0 8px;background:none;height:28px}
.rng::-webkit-slider-runnable-track{height:4px;border-radius:2px}
.rng::-webkit-slider-thumb{appearance:none;border-radius:50%;background:#117865}
.a{width:167px}
.a::-webkit-slider-runnable-track{background:linear-gradient(90deg,#2d806f 43%,#c8c8c8 43%)}
.a::-webkit-slider-thumb{width:28px;height:28px;margin-top:-12px;border:2px solid #fff}
.b{width:210px}
.b::-webkit-slider-runnable-track{background:linear-gradient(90deg,#117865 46%,#616161 46%)}
.b::-webkit-slider-thumb{width:26px;height:26px;margin-top:-11px;border:4px solid #fff;box-shadow:0 0 0 1px #ccc}
.float{position:absolute;right:-1px;top:-11px;width:194px;height:56px;padding:0 12px;display:flex;align-items:center;justify-content:space-between;background:#fff;border:1px solid #ccc;border-radius:6px;box-shadow:0 2px 4px #0003;color:#707070}

.veil{position:absolute;inset:0;display:flex;align-items:center;justify-content:center;padding:8px 0 0 13px;pointer-events:none}
.dialog{width:584px;height:465px;padding:42px 40px 40px;border-radius:8px;background:#fff;box-shadow:0 4px 20px #0004;pointer-events:auto;display:flex;flex-direction:column}
.dhead{display:flex;justify-content:space-between;align-items:center;height:36px}
.dhead h3{margin:0;font-size:27px;font-weight:600;color:#333}
h4{margin:0;font-size:19px;line-height:26px;font-weight:600;color:#333}
.dhead + h4{margin-top:26px}
.fmts{display:flex;gap:26px;margin:16px 7px 33px 0}
.fmt{width:235px;height:73px;padding-left:24px;gap:17px;border:1px solid #d5dbe0;border-radius:6px;background:#fff;box-shadow:0 2px 4px #0002;font-size:21px;color:#444}
.fmt.on{border:2px solid #2f8a78}
.radios{display:flex;gap:44px;margin-top:13px;font-size:19px;color:#444}
.radios label{display:flex;align-items:center;gap:15px}
.radios input{appearance:none;width:22px;height:22px;margin:0;border:2px solid #707070;border-radius:50%}
.radios input:checked{border-color:#117865;background:radial-gradient(#117865 0 6px,#fff 7px)}
.dfoot{display:flex;justify-content:space-between;margin-top:auto}
.dfoot a{display:flex;gap:12px;align-items:center;height:40px;color:#117865;font-size:22px}
.go{width:161px;height:52px;justify-content:center;border-radius:6px;background:#117865;color:#fff;font-size:21px}

.foot{height:55px;margin-right:4px;border-top:2px solid #c4c4c4;background:#f4f4f4;display:flex;align-items:center;justify-content:flex-end;gap:16px}
.pctbox{width:90px;height:42px;margin-left:9px;padding:0 12px 0 6px;display:flex;align-items:center;border:1px solid #d1d1d1;border-bottom:2px solid #444;border-radius:6px;background:#fff;font-size:19px}
.pctbox input{width:54px;border:0;padding:0;background:none;font-size:23px}
.fitb{margin-left:16px}
.foot .vs{height:40px}
.fchev{width:12px}
.dev{width:56px;height:53px;margin-left:-4px}
.dev.on{background:#e8e8e8}
.dev + .dev{width:38px;margin:0 21px 0 -8px}
```
FILE: grid.js
```js
// Month blocks: sales, profit, trend arrow, quantity. "-" marks a cell with no value.
const months = ["August", "September", "October", "November", "December"];
const rows = `
All|762|154.15 22.04 - 2,652|304.63 36.15 - 5,000|204.73 32.62 - 3,122|330.68 42.14 - 5,602|340.52 35.04 - 5,489
Furniture|612|42.32 0.24 rt 472|105.52 4.91 up 979|58.72 2.74 ne 709|112.24 4.44 up 1,115|130.58 5.12 up 1,378
Bookcases|85|5.08 0.08 dn 51|23.49 - - -|- - - 69|22.76 0.46 dn 123|9.50 -1.57 dn 112
Chairs|179|18.74 0.86 dn 124|50.24 - - -|- - - 205|46.73 3.08 se 322|59.29 6.75 rt 437
Furnishings|285|4.58 0.44 se 204|11.15 - - -|- - - 308|12.21 2.18 rt 488|18.35 2.09 ne 595
Tables|63|13.91 -1.14 dn 93|20.64 - - -|- - - 127|30.54 -1.28 dn 182|43.45 -2.15 se 234
Office Supplies|639|62.03 13.04 up 1,683|98.69 - - -|- - - 1,805|99.32 15.83 up 3,446|102.13 17.66 up 3,128
Appliances|76|13.66 3.02 dn 173|9.83 - - -|- - - 115|20.33 4.39 se 268|15.03 2.63 se 270
Art|259|1.71 0.45 dn 187|3.54 - - -|- - - 204|3.77 0.94 rt 410|3.86 0.79 rt 431
Binders|430|20.55 4.85 rt 461|37.78 - - -|- - - 478|19.81 -0.90 up 910|31.10 3.61 up 774
Envelopes|55|0.84 0.36 dn 43|1.98 - - -|- - - 91|2.97 1.24 dn 152|2.72 1.15 dn 131
Fasteners|66|0.24 0.08 dn 70|0.35 - - -|- - - 85|0.49 0.17 dn 132|0.46 0.16 dn 140
Labels|88|0.93 0.43 dn 126|1.47 0.62 se 208|0.76 0.33 dn 127|2.43 1.02 se 200|1.01 0.45 dn 157
Paper|356|6.00 2.58 se 346|10.24 4.54 up 770|5.64 2.41 rt 385|11.88 5.21 up 764|11.66 5.07 up 753
Storage|257|17.39 1.18 se 212|27.00 3.07 rt 448|18.38 0.56 se 279|36.20 3.85 rt 512|32.00 3.83 rt 396
Supplies|52|0.72 0.08 dn 65|6.49 -1.16 dn 90|0.86 0.08 dn 41|1.43 -0.09 dn 98|4.30 -0.04 dn 76
Technology|511|49.80 8.76 rt 497|100.43 14.19 up 890|90.89 25.14 ne 608|119.13 21.86 up 1,041|107.81 12.25 up 983
Accessories|203|13.17 2.99 se 233|25.36 6.71 rt 421|13.45 2.86 se 231|25.42 6.14 rt 469|26.58 6.65 rt 476
Copiers|27|2.93 1.13 dn 7|12.64 4.56 dn 31|37.06 15.86 dn 29|14.99 6.21 dn 15|19.40 7.23 dn 42
Machines|16|6.02 1.29 dn 21|24.97 -2.38 dn 63|12.21 1.56 dn 58|28.37 2.43 dn 73|17.12 -7.82 dn 34
Phones|265|27.68 3.35 se 236|37.45 5.30 rt 375|28.17 4.86 se 290|50.35 7.08 rt 484|44.70 6.19 rt 431`.trim().split("\n");
const parents = ["All", "Furniture", "Office Supplies", "Technology"];
const steps = [16, 33, 48, 70, 95, 115];
const heat = v => "h" + (1 + steps.filter(s => v > s).length);
const firstSelected = 2;

let h = '<colgroup><col style="width:241px"><col style="width:82px">';
months.forEach((m, i) => {
  h += `<col style="width:160px"><col style="width:148px"><col style="width:${i % 2 ? 153 : 154}px">`;
});
h += '</colgroup><thead><tr class="months"><th class="name" scope="col">Month</th><th></th>';
months.forEach(m => { h += `<th colspan="3" scope="colgroup">${m}</th>`; });
h += '</tr><tr class="measures"><th class="name" scope="col">Category</th><th class="clip"><div>Sum of</div><div>Quantity</div></th>';
months.forEach((m, i) => {
  const s = i >= firstSelected ? "s" : "";
  const e = i === firstSelected ? " edge" : "";
  h += `<th class="${s}${e}">Sum of Sales<small>in Thousands</small></th><th class="${s}">Sum of Profit<small>in Thousands</small></th><th class="${s}">Sum of<br>Quantity</th>`;
});
h += "</tr></thead><tbody>";
rows.forEach(line => {
  const [name, q0, ...blocks] = line.split("|");
  const parent = parents.includes(name);
  h += `<tr class="${parent ? "p" : ""}"><th class="name" scope="row">${parent ? '<i class="box"></i>' : ""}${name}</th><td class="clip"><div>${q0}.00</div></td>`;
  blocks.forEach((b, i) => {
    const [sales, profit, arrow, qty] = b.split(" ");
    const s = i >= firstSelected ? " s" : "";
    const e = i === firstSelected ? " edge" : "";
    const c = sales !== "-" && name !== "All" ? heat(+sales) : "";
    h += `<td class="${c}${s}${e}">${sales === "-" ? "" : sales}</td><td class="${s}">${profit === "-" ? "" : profit}</td>`;
    h += `<td class="q${s}">${arrow === "-" ? "" : `<svg class="arr ${arrow}"><use href="#${arrow}"/></svg>`}${qty === "-" ? "" : qty + ".00"}</td>`;
  });
  h += "</tr>";
});
document.getElementById("grid").innerHTML = h + "</tbody>";
```
